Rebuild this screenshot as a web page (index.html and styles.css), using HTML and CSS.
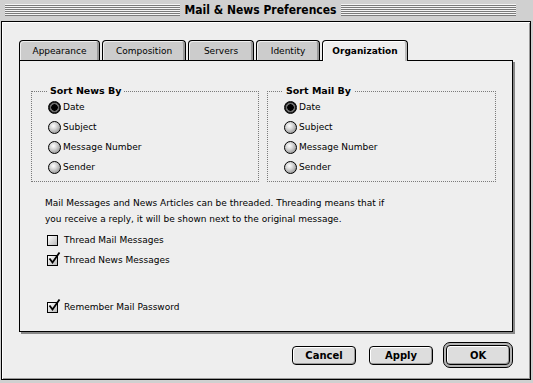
FILE: index.html
```html
<!DOCTYPE html>
<html lang="en">
<head>
  <meta charset="UTF-8">
  <title>Mail &amp; News Preferences</title>
  <link rel="stylesheet" href="styles.css">
</head>
<body>
  <div class="window">
    <div class="titlebar">
      <span class="stripes"></span>
      <span class="title">Mail &amp; News Preferences</span>
      <span class="stripes"></span>
    </div>
    <div class="content">
      <div class="tabs">
        <div class="tab tab-appearance">Appearance</div>
        <div class="tab tab-composition">Composition</div>
        <div class="tab tab-servers">Servers</div>
        <div class="tab tab-identity">Identity</div>
        <div class="tab tab-organization active">Organization</div>
      </div>
      <div class="panel">
        <div class="groups">
          <fieldset class="group group-news">
            <legend>Sort News By</legend>
            <div class="radio-row"><span class="radio on"></span>Date</div>
            <div class="radio-row"><span class="radio"></span>Subject</div>
            <div class="radio-row"><span class="radio"></span>Message Number</div>
            <div class="radio-row"><span class="radio"></span>Sender</div>
          </fieldset>
          <fieldset class="group group-mail">
            <legend>Sort Mail By</legend>
            <div class="radio-row"><span class="radio on"></span>Date</div>
            <div class="radio-row"><span class="radio"></span>Subject</div>
            <div class="radio-row"><span class="radio"></span>Message Number</div>
            <div class="radio-row"><span class="radio"></span>Sender</div>
          </fieldset>
        </div>
        <p class="note">Mail Messages and News Articles can be threaded. Threading means that if<br>you receive a reply, it will be shown next to the original message.</p>
        <div class="check-row first"><span class="checkbox"></span>Thread Mail Messages</div>
        <div class="check-row"><span class="checkbox"><svg width="14" height="14" viewBox="0 0 14 14"><path d="M2.5 6.5 L5.5 10.5 L12.5 0.5" fill="none" stroke="#000" stroke-width="1.8"/></svg></span>Thread News Messages</div>
        <div class="check-row spaced"><span class="checkbox"><svg width="14" height="14" viewBox="0 0 14 14"><path d="M2.5 6.5 L5.5 10.5 L12.5 0.5" fill="none" stroke="#000" stroke-width="1.8"/></svg></span>Remember Mail Password</div>
      </div>
      <div class="buttons">
        <button class="btn btn-cancel">Cancel</button>
        <button class="btn btn-apply">Apply</button>
        <div class="default-ring"><button class="btn">OK</button></div>
      </div>
    </div>
  </div>
</body>
</html>
```

FILE: styles.css
```css
* { margin:0; padding:0; box-sizing:border-box; }
body { font-family:"DejaVu Sans",Verdana,sans-serif; font-size:9px; color:#000; background:#ddd; }

.window { width:533px; height:383px; background:#d0d0d0; padding:0 2px 3px 1px; }

/* title bar */
.titlebar { height:21px; display:flex; align-items:flex-start; padding:0 15px 0 4px; gap:5px; }
.stripes { flex:1; height:12px; margin-top:4px;
           background:repeating-linear-gradient(#f4f4f4 0 1px, #7a7a7a 1px 2px); }
.title { font-family:"DejaVu Sans Condensed","DejaVu Sans",sans-serif; font-weight:bold; font-size:12px; line-height:21px; }

.content { height:359px; background:#eee; border:1px solid #000; padding:18px 0 0 17px;
           box-shadow:inset 1px 1px 0 #fff, inset -1px -1px 0 #999; }

/* tabs */
.tabs { display:flex; gap:2px; height:20px; align-items:flex-end; position:relative; z-index:1; }
.tab { height:20px; background:#ccc; border:1px solid #000; border-bottom:none; border-radius:4px 4px 0 0;
       display:flex; align-items:center; justify-content:center;
       box-shadow:inset 1px 1px 0 #eee, inset -2px 0 0 #999; }
.tab.active { height:21px; margin-bottom:-1px; background:#eee; font-weight:bold;
              box-shadow:inset 1px 1px 0 #fff, inset -2px 0 0 #bbb; }
.tab-appearance { width:81px; }
.tab-composition { width:84px; }
.tab-servers { width:66px; }
.tab-identity { width:64px; }
.tab-organization { width:86px; }

.panel { width:494px; height:272px; border:1px solid #000; background:#eee;
         box-shadow:2px 2px 0 #888; padding:24px 0 0 11px; }

/* group boxes */
.groups { display:flex; gap:8px; }
.group { border:1px dotted #7a7a7a; padding:0 8px 4px 15px; }
.group-news { width:228px; }
.group-mail { width:229px; }
.group legend { font-weight:bold; font-size:9.5px; padding:0 3px; line-height:12px; }
.radio-row { display:flex; align-items:center; gap:2px; height:20px; padding-left:1px; }
.radio { width:13px; height:13px; border-radius:50%; border:1px solid #000;
         background:radial-gradient(circle at 40% 35%, #fff 0, #d6d6d6 35%, #8a8a8a 90%); }
.radio.on { background:radial-gradient(circle, #000 0 3px, #6a6a6a 3.5px 4.5px, #222 5px); }

.note { margin:13px 0 0 14px; line-height:16px; }

/* checkboxes */
.check-row { display:flex; align-items:center; gap:6px; height:20px; margin-left:16px; }
.check-row.first { margin-top:3px; }
.check-row.spaced { margin-top:27px; }
.checkbox { width:11px; height:11px; border:1px solid #000; position:relative;
            background:linear-gradient(135deg, #fff, #b8b8b8); }
.checkbox svg { position:absolute; left:-1px; top:-4px; }

/* buttons */
.buttons { width:494px; margin-top:10px; display:flex; justify-content:flex-end; align-items:center; }
.btn { height:19px; width:64px; border:1px solid #000; border-radius:4px; background:#ddd;
       font-family:"DejaVu Sans",sans-serif; font-weight:bold; font-size:10px; color:#000;
       box-shadow:inset 1px 1px 0 #fff, inset -1px -1px 0 #999; }
.btn-cancel { margin-right:13px; }
.btn-apply { margin-right:10px; }
.default-ring { width:70px; height:26px; border:1px solid #000; border-radius:7px; padding:2px;
                background:#b4b4b4; display:flex; }
.default-ring .btn { width:100%; height:100%; }
```
